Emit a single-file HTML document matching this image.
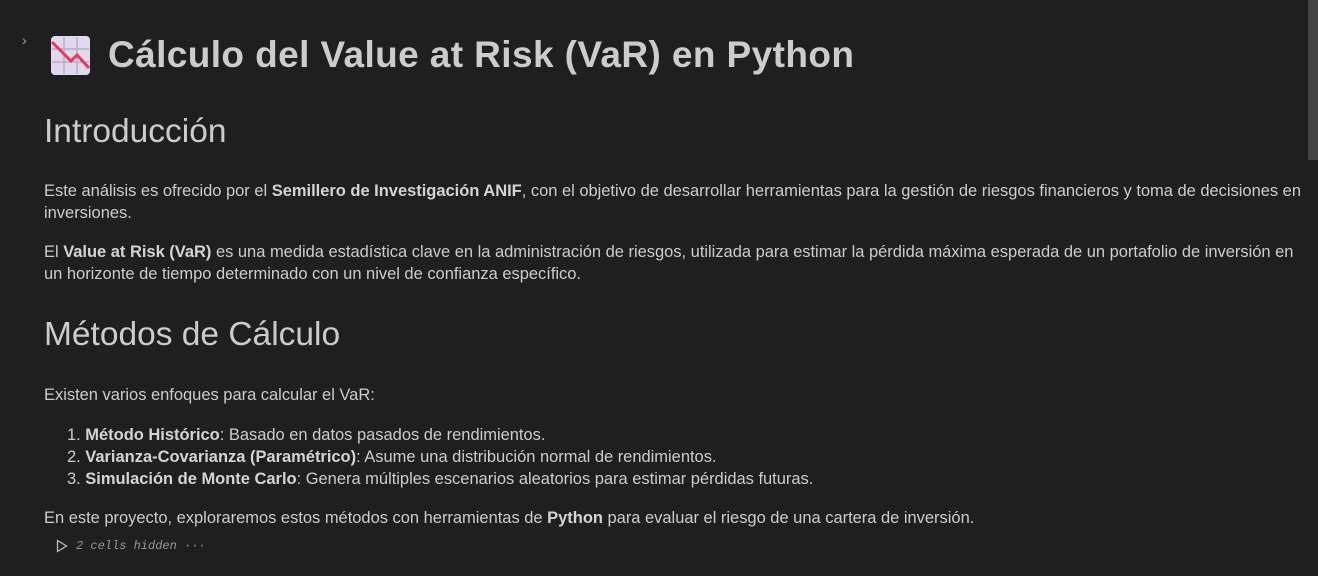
<!DOCTYPE html>
<html><head><meta charset="utf-8"><style>
html,body{margin:0;padding:0;background:#1f1f1f;width:1318px;height:576px;overflow:hidden;position:relative;font-family:"Liberation Sans",sans-serif;color:#cccccc}
.a{position:absolute;white-space:nowrap}
p{margin:0}
.b{font-size:16.5px;line-height:22px;left:44px;letter-spacing:-0.02px}
b{color:#d4d4d4}
</style></head><body>
<div class="a" style="left:22px;top:32px;font-size:14px;color:#aaa">›</div>
<svg class="a" style="left:51px;top:36px" width="39" height="39" viewBox="0 0 39 39">
<rect x="0" y="0" width="39" height="39" rx="4" fill="#e2d8ee"/>
<path d="M13 1V38M26 1V38M1 13H38M1 26H38" stroke="#b8adc4" stroke-width="1.5"/>
<path d="M1 6L20 25L26 19L38 32" stroke="#e8365d" stroke-width="3" fill="none"/>
</svg>
<div class="a" style="left:108px;top:33px;font-size:37px;font-weight:bold;line-height:44px;color:#cccccc;letter-spacing:0.4px">Cálculo del Value at Risk (VaR) en Python</div>
<div class="a" style="left:44px;top:112px;font-size:33.5px;line-height:40px">Introducción</div>
<div class="a b" style="top:180px">Este análisis es ofrecido por el <b>Semillero de Investigación ANIF</b>, con el objetivo de desarrollar herramientas para la gestión de riesgos financieros y toma de decisiones en<br>inversiones.</div>
<div class="a b" style="top:241px">El <b>Value at Risk (VaR)</b> es una medida estadística clave en la administración de riesgos, utilizada para estimar la pérdida máxima esperada de un portafolio de inversión en<br>un horizonte de tiempo determinado con un nivel de confianza específico.</div>
<div class="a" style="left:44px;top:315px;font-size:33.5px;line-height:40px">Métodos de Cálculo</div>
<div class="a b" style="top:384px">Existen varios enfoques para calcular el VaR:</div>
<div class="a b" style="top:424px;left:67px">1. <b>Método Histórico</b>: Basado en datos pasados de rendimientos.<br>2. <b>Varianza-Covarianza (Paramétrico)</b>: Asume una distribución normal de rendimientos.<br>3. <b>Simulación de Monte Carlo</b>: Genera múltiples escenarios aleatorios para estimar pérdidas futuras.</div>
<div class="a b" style="top:507px">En este proyecto, exploraremos estos métodos con herramientas de <b>Python</b> para evaluar el riesgo de una cartera de inversión.</div>
<svg class="a" style="left:56px;top:539px" width="12" height="14"><path d="M1.5 1.5L10.5 7L1.5 12.5Z" fill="none" stroke="#bbb" stroke-width="1.3"/></svg>
<div class="a" style="left:76px;top:537px;font-family:'Liberation Mono',monospace;font-style:italic;font-size:12px;line-height:18px;color:#999">2 cells hidden ···</div>
<div class="a" style="left:1308px;top:0;width:10px;height:160px;background:#434343"></div>
</body></html>
